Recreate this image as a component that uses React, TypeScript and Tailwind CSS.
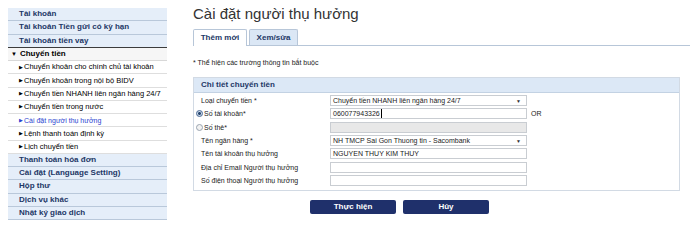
const menuTop = ['Tài khoản', 'Tài khoản Tiền gửi có kỳ hạn', 'Tài khoản tiền vay']
const subItems = [
  'Chuyển khoản cho chính chủ tài khoản',
  'Chuyển khoản trong nội bộ BIDV',
  'Chuyển tiền NHANH liên ngân hàng 24/7',
  'Chuyển tiền trong nước',
  'Cài đặt người thụ hưởng',
  'Lệnh thanh toán định kỳ',
  'Lịch chuyển tiền',
]
const menuBottom = ['Thanh toán hóa đơn', 'Cài đặt (Language Setting)', 'Hộp thư', 'Dịch vụ khác', 'Nhật ký giao dịch']

function Field({ label, children, radio }: { label: string; children?: React.ReactNode; radio?: 'on' | 'off' }) {
  return (
    <div className="flex h-[13.3px] items-center">
      <div className="flex w-[129px] items-center">
        {radio && (
          <span
            className={`mr-[1px] -ml-[5px] inline-block h-[7px] w-[7px] rounded-full border ${
              radio === 'on' ? 'border-[#4a6a96] bg-[radial-gradient(circle,#24446e_35%,#c9d6e6_45%)]' : 'border-[#9aa4b0] bg-[#f2f2f2]'
            }`}
          />
        )}
        <span>{label}</span>
      </div>
      {children}
    </div>
  )
}

function Box({ value, disabled, select, caret }: { value?: string; disabled?: boolean; select?: boolean; caret?: boolean }) {
  return (
    <div
      className={`relative flex h-[11px] w-[197px] items-center border border-[#c9cdd2] pl-[2px] text-[7px] ${
        disabled ? 'bg-[#e8e8e8]' : 'bg-white'
      }`}
    >
      <span>{value}</span>
      {caret && <span className="ml-[1px] h-[9px] w-px bg-black" />}
      {select && <span className="absolute right-[5px] top-[3px] text-[5px] leading-none text-[#333]">▼</span>}
    </div>
  )
}

export default function App() {
  return (
    <div className="flex h-[244px] w-[699px] bg-white text-[8px] leading-none text-[#222]" style={{ fontFamily: '"Liberation Sans", Arial, sans-serif' }}>
      {/* Sidebar */}
      <div className="ml-[8px] mt-[8px] w-[159px]">
        {menuTop.map((m, i) => (
          <div
            key={m}
            className={`flex h-[13.25px] items-center bg-[#e5eef9] pl-[11px] font-bold text-[#1d3766] ${
              i === menuTop.length - 1 ? 'border-b border-[#3c3c3c]' : 'border-b border-[#b9c8da]'
            }`}
          >
            {m}
          </div>
        ))}
        <div className="flex h-[13.25px] items-center border-b border-[#d8d8d8] bg-[#f6f6f6] pl-[3px] font-bold text-black">
          <span className="mr-[3px] text-[6px]">▼</span>Chuyển tiền
        </div>
        {subItems.map((s) => (
          <div
            key={s}
            className={`flex h-[13.25px] items-center border-b border-[#dedede] bg-white pl-[11px] text-[7.5px] ${
              s === 'Cài đặt người thụ hưởng' ? 'text-[7px] text-[#2b3fd0]' : 'text-black'
            }`}
          >
            <span className="mr-[1px] text-[5px]">▶</span>
            {s}
          </div>
        ))}
        {menuBottom.map((m) => (
          <div key={m} className="flex h-[13.25px] items-center border-b border-[#b9c8da] bg-[#e5eef9] pl-[11px] font-bold text-[#1d3766]">
            {m}
          </div>
        ))}
      </div>

      {/* Main */}
      <div className="ml-[26px] flex-1">
        <h1 className="mt-[6px] text-[15px] leading-[15px] text-[#333]">Cài đặt người thụ hưởng</h1>

        <div className="mt-[8px] mr-[9px] flex h-[17px] items-end border-b border-[#b7c6d8]">
          <div className="-mb-px flex h-[17px] w-[54px] items-center justify-center rounded-t-[2px] border border-b-0 border-[#b7c6d8] bg-white font-bold text-[#1d3766]">
            Thêm mới
          </div>
          <div className="ml-[2px] flex h-[16px] w-[49px] items-center justify-center rounded-t-[2px] border border-b-0 border-[#b7c6d8] bg-[#dbe7f5] font-bold text-[#1d3766]">
            Xem/sửa
          </div>
        </div>

        <p className="mt-[13px] text-[7px]">* Thể hiện các trường thông tin bắt buộc</p>

        <div className="mt-[11px] mr-[19px] border border-[#d2dae4] pb-[3px] text-[7px]">
          <div className="flex h-[15px] items-center border-b border-[#c3d2e3] bg-[#dce8f6] pl-[7px] text-[8px] font-bold text-[#1d3766]">
            Chi tiết chuyển tiền
          </div>
          <div className="pl-[7px] pt-[1px]">
            <Field label="Loại chuyển tiền *">
              <Box value="Chuyển tiền NHANH liên ngân hàng 24/7" select />
            </Field>
            <Field label="Số tài khoản*" radio="on">
              <Box value="060077943326" caret />
              <span className="ml-[4px]">OR</span>
            </Field>
            <Field label="Số thẻ*" radio="off">
              <Box disabled />
            </Field>
            <Field label="Tên ngân hàng *">
              <Box value="NH TMCP Sai Gon Thuong tin - Sacombank" select />
            </Field>
            <Field label="Tên tài khoản thụ hưởng">
              <Box value="NGUYEN THUY KIM THUY" />
            </Field>
            <Field label="Địa chỉ Email Người thụ hưởng">
              <Box />
            </Field>
            <Field label="Số điện thoại Người thụ hưởng">
              <Box />
            </Field>
          </div>
        </div>

        <div className="mt-[9px] ml-[117px] flex gap-[7px]">
          <button className="h-[14px] w-[86px] rounded-[2px] bg-[#1f306b] text-[8px] font-bold text-white">Thực hiện</button>
          <button className="h-[14px] w-[86px] rounded-[2px] bg-[#1f306b] text-[8px] font-bold text-white">Hủy</button>
        </div>
      </div>
    </div>
  )
}
